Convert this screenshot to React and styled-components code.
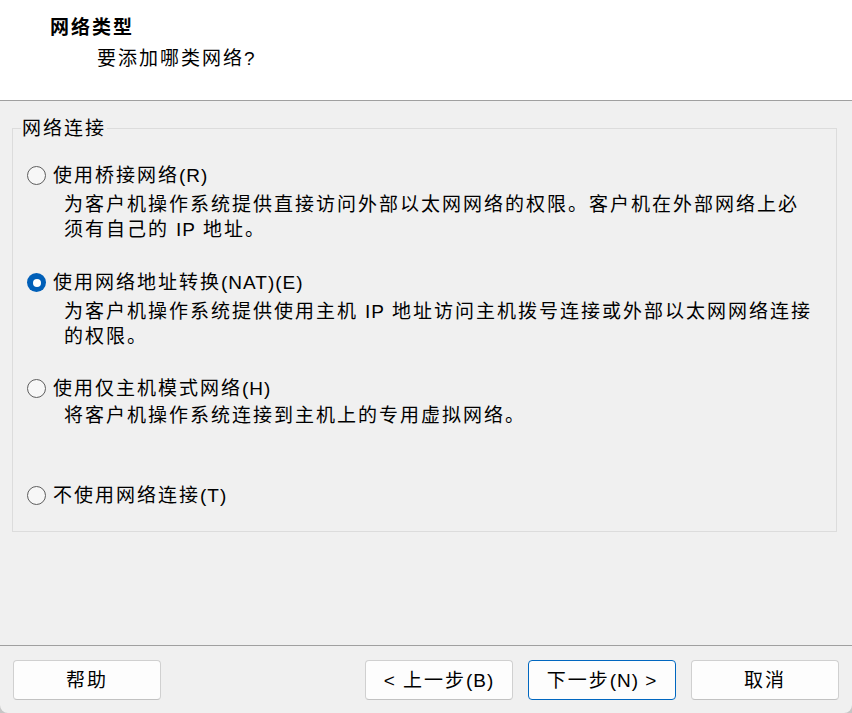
import React from "react";
import styled, { createGlobalStyle } from "styled-components";

const Global = createGlobalStyle`
  html, body { margin: 0; padding: 0; background: #c6c6c6; }
  body { font-family: "Liberation Sans", "Noto Sans CJK SC", sans-serif; }
  * { box-sizing: border-box; }
`;

const Window = styled.div`
  width: 852px;
  height: 713px;
  display: flex;
  flex-direction: column;
  background: #f0f0f0;
  border-radius: 0 0 8px 8px;
  overflow: hidden;
  color: #000;
  font-size: 19px;
  line-height: 25px;
  letter-spacing: 2px;
`;

const Header = styled.div`
  height: 101px;
  flex: none;
  background: #ffffff;
  border-bottom: 1px solid #a0a0a0;
  padding: 15px 0 0 50px;
`;

const Title = styled.div`
  font-weight: bold;
`;

const Subtitle = styled.div`
  margin: 6px 0 0 47px;
`;

const Lat = styled.span`
  font-family: "Liberation Sans", sans-serif;
  letter-spacing: 1px;
  margin-left: ${(p) => p.$before || 0}px;
  margin-right: ${(p) => p.$after || 0}px;
`;

const Body = styled.div`
  flex: 1;
  padding: 15px 15px 0 12px;
`;

const Group = styled.fieldset`
  margin: 0;
  padding: 0 0 23px 0;
  border: 1px solid #dcdcdc;
  min-width: 0;
`;

const Legend = styled.legend`
  margin-left: 8px;
  padding: 0 1px;
`;

const OptionList = styled.div`
  padding: 22px 0 0 14px;
  display: flex;
  flex-direction: column;
`;

const Option = styled.div`
  margin-top: ${(p) => p.$gap}px;
`;

const RadioRow = styled.div`
  display: flex;
  align-items: center;
  height: 25px;
  gap: 7px;
`;

const Radio = styled.span`
  width: 19px;
  height: 19px;
  flex: none;
  border-radius: 50%;
  display: flex;
  align-items: center;
  justify-content: center;
  border: ${(p) => (p.$checked ? "none" : "1px solid #5e5e5e")};
  background: ${(p) => (p.$checked ? "#005fb8" : "#f7f7f7")};
  &::after {
    content: "";
    display: ${(p) => (p.$checked ? "block" : "none")};
    width: 8px;
    height: 8px;
    border-radius: 50%;
    background: #ffffff;
  }
`;

const Desc = styled.div`
  margin-top: ${(p) => p.$top}px;
  padding-left: 37px;
  width: 787px;
`;

const Footer = styled.div`
  flex: none;
  height: 68px;
  border-top: 1px solid #a0a0a0;
  padding: 14px 13px 0 13px;
  display: flex;
  gap: 15px;
`;

const Spacer = styled.div`
  flex: 1;
`;

const Button = styled.button`
  width: 148px;
  height: 40px;
  margin: 0;
  padding: 0;
  font: inherit;
  letter-spacing: 2px;
  color: #000;
  background: #fdfdfd;
  border: 1px solid ${(p) => (p.$primary ? "#0067c0" : "#d0d0d0")};
  border-bottom-color: ${(p) => (p.$primary ? "#0067c0" : "#c2c2c2")};
  border-radius: 4px;
  display: flex;
  align-items: center;
  justify-content: center;
`;

const options = [
  {
    gap: 0,
    top: 4,
    checked: false,
    label: ["使用桥接网络", "(R)"],
    desc: ["为客户机操作系统提供直接访问外部以太网网络的权限。客户机在外部网络上必须有自己的", "IP", "地址。"],
  },
  {
    gap: 28,
    top: 4,
    checked: true,
    label: ["使用网络地址转换", "(NAT)(E)"],
    desc: ["为客户机操作系统提供使用主机", "IP", "地址访问主机拨号连接或外部以太网网络连接的权限。"],
  },
  {
    gap: 27,
    top: 2,
    checked: false,
    label: ["使用仅主机模式网络", "(H)"],
    desc: ["将客户机操作系统连接到主机上的专用虚拟网络。"],
  },
  {
    gap: 55,
    top: 0,
    checked: false,
    label: ["不使用网络连接", "(T)"],
    desc: null,
  },
];

function Mixed({ parts, pad }) {
  return parts.map((t, i) =>
    i % 2 === 1 ? (
      <Lat key={i} $before={pad} $after={pad}>
        {t}
      </Lat>
    ) : (
      <React.Fragment key={i}>{t}</React.Fragment>
    )
  );
}

export default function App() {
  return (
    <>
      <Global />
      <Window>
        <Header>
          <Title>网络类型</Title>
          <Subtitle>
            要添加哪类网络<Lat>?</Lat>
          </Subtitle>
        </Header>
        <Body>
          <Group>
            <Legend>网络连接</Legend>
            <OptionList>
              {options.map((o, i) => (
                <Option key={i} $gap={o.gap}>
                  <RadioRow>
                    <Radio $checked={o.checked} />
                    <span>
                      <Mixed parts={o.label} />
                    </span>
                  </RadioRow>
                  {o.desc && (
                    <Desc $top={o.top}>
                      <Mixed parts={o.desc} pad={7} />
                    </Desc>
                  )}
                </Option>
              ))}
            </OptionList>
          </Group>
        </Body>
        <Footer>
          <Button>帮助</Button>
          <Spacer />
          <Button>
            <Lat $after={7}>&lt;</Lat>上一步<Lat>(B)</Lat>
          </Button>
          <Button $primary>
            下一步<Lat>(N)</Lat>
            <Lat $before={6}>&gt;</Lat>
          </Button>
          <Button>取消</Button>
        </Footer>
      </Window>
    </>
  );
}
